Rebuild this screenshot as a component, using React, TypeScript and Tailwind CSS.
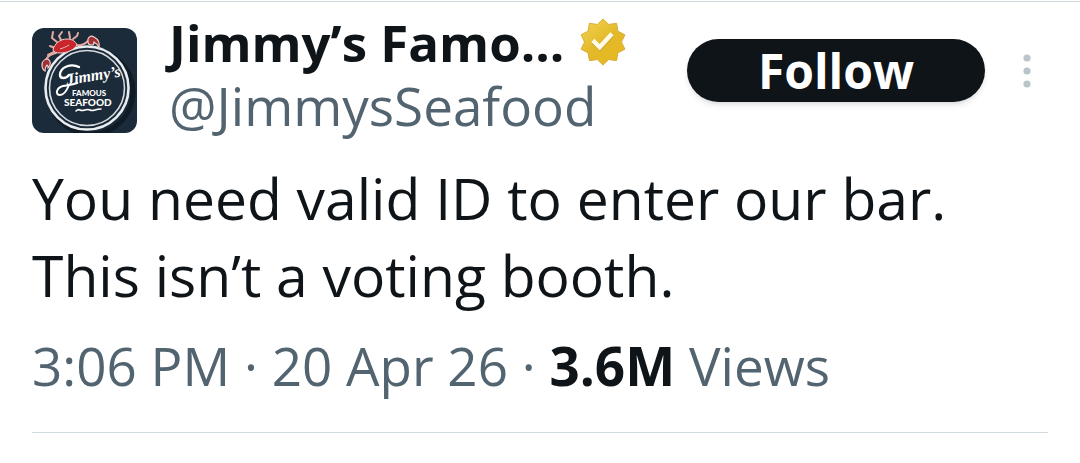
const BADGE_OUTLINE =
  'M13.324 3.848L11 1.6 8.676 3.848l-3.201-.453-.559 3.184L2.06 8.095 3.48 11l-1.42 2.904 2.856 1.516.559 3.184 3.201-.452L11 20.4l2.324-2.248 3.201.452.559-3.184 2.856-1.516L18.52 11l1.42-2.905-2.856-1.516-.559-3.184z';

const post = {
  name: 'Jimmy’s Famo...',
  handle: '@JimmysSeafood',
  lines: ['You need valid ID to enter our bar.', 'This isn’t a voting booth.'],
  time: '3:06 PM',
  date: '20 Apr 26',
  views: '3.6M',
};

function Avatar() {
  return (
    <svg
      viewBox="0 0 105 105"
      className="size-[105px] shrink-0 rounded-xl bg-[#1b2b3a]"
      role="img"
      aria-label="Jimmy's Famous Seafood"
    >
      {/* drop shadow behind the rings */}
      <circle cx="59" cy="64" r="42" fill="none" stroke="#101b26" strokeWidth="5" />
      <circle cx="55" cy="60" r="41.5" fill="#1b2b3a" stroke="#e9edf0" strokeWidth="2.6" />
      <circle cx="55" cy="60" r="37.5" fill="none" stroke="#d5dbdf" strokeWidth="1.6" />

      {/* crab */}
      <g fill="none" stroke="#e3a9a3" strokeWidth="2" strokeLinecap="round" strokeLinejoin="round">
        <path d="M25 14l-5-4 1-6M29 12l-2-4 3-4M38 10l-1-6M41 11l4-3 1-3" />
        <path d="M23 20l-5-2M22 24l-6 3M44 17c5 1 9-1 12-4M24 25c-6 1-9 4-11 8" />
      </g>
      <path
        d="M21 22c1-6 7-11 14-11 6 0 9 3 10 6-3 5-10 8-17 8-4 0-6-1-7-3z"
        fill="#c9252c"
        stroke="#f0cfcb"
        strokeWidth="1"
      />
      <path d="M28 21c3-1 6-2 9-4" fill="none" stroke="#f2b8b3" strokeWidth="1" />
      <path
        d="M56 14c-1-5 3-7 6-5 4 2 6 6 5 11-1-3-3-5-5-6 0 2-1 3-2 3-2 0-4-1-4-3z"
        fill="#9f3034"
        stroke="#f0cfcb"
        strokeWidth="1.2"
      />
      <path
        d="M16 31c-4 0-6 3-6 6 0 3 1 5 3 6 0-3 0-4 2-6 1 0 1 1 1 3 3-3 3-7 0-9z"
        fill="#9f3034"
        stroke="#f0cfcb"
        strokeWidth="1.2"
      />

      {/* flourishes of the script initial */}
      <path
        d="M47 39c-8-4-19 0-19 8 0 4 6 4 9 0"
        fill="none"
        stroke="#fff"
        strokeWidth="2.4"
        strokeLinecap="round"
      />
      <path
        d="M37 57c-2 5-5 10-9 10-5 0-4-7 3-9 4-1 9-1 14-3"
        fill="none"
        stroke="#fff"
        strokeWidth="2"
        strokeLinecap="round"
      />
      <g fill="#fff">
        <text
          x="35"
          y="57"
          fontSize="16"
          transform="rotate(-9 35 57)"
          className="font-['Liberation_Serif',serif] font-bold italic"
        >
          Jimmy’s
        </text>
        <text x="40" y="68" fontSize="8" className="font-['Lato',sans-serif] font-black">
          FAMOUS
        </text>
        <text x="32" y="78" fontSize="10" className="font-['Lato',sans-serif] font-black">
          SEAFOOD
        </text>
      </g>
      <path
        d="M44 83q2-2 4-1t5 0 5 0 5 0 6-1"
        fill="none"
        stroke="#fff"
        strokeWidth="1.6"
        strokeLinecap="round"
      />
    </svg>
  );
}

function GoldBadge() {
  return (
    <svg viewBox="0 0 22 22" className="size-[54px] shrink-0" role="img" aria-label="Verified">
      <defs>
        <linearGradient id="gold" x1="4" y1="2" x2="18" y2="20" gradientUnits="userSpaceOnUse">
          <stop offset="0" stopColor="#f2d24c" />
          <stop offset="0.5" stopColor="#e3b92b" />
          <stop offset="1" stopColor="#e5b91c" />
        </linearGradient>
      </defs>
      <path d={BADGE_OUTLINE} fill="url(#gold)" stroke="#d8ab38" strokeWidth="0.4" />
      <path
        d="M6.234 11.423l3.428 3.428 5.683-6.206-1.347-1.247-4.4 4.795-2.072-2.072z"
        fill="#c9961c"
      />
      <path
        d="M6.234 11.023l3.428 3.428 5.683-6.206-1.347-1.247-4.4 4.795-2.072-2.072z"
        fill="#fffbe8"
      />
    </svg>
  );
}

export default function App() {
  return (
    <main className="bg-white pt-px font-['Open_Sans',sans-serif] text-[#0f1419]">
      <article className="border-t border-[#cfd9de] px-8 pt-2">
        <header className="flex items-start">
          <div className="mt-[18px] flex shrink-0">
            <Avatar />
          </div>
          <div className="ml-8 min-w-0 flex-1 whitespace-nowrap leading-16">
            <div className="flex items-center gap-3">
              <h1 className="text-[51px] font-bold">{post.name}</h1>
              <GoldBadge />
            </div>
            <a href="#profile" className="block text-[53px] text-[#536471]">
              {post.handle}
            </a>
          </div>
          <div className="mt-[29px] flex shrink-0 items-center">
            <button
              type="button"
              className="h-[63px] w-[298px] rounded-full bg-[#0f1419] text-[48px] leading-[63px] font-bold text-white shadow-md"
            >
              Follow
            </button>
            <button type="button" aria-label="More" className="ml-5 flex w-[43px] justify-center">
              <svg viewBox="0 0 20 40" className="h-10 w-5" fill="#b9c5cb">
                <circle cx="10" cy="7" r="3.6" />
                <circle cx="10" cy="20" r="3.6" />
                <circle cx="10" cy="33" r="3.6" />
              </svg>
            </button>
          </div>
        </header>

        <div className="mt-[22px] text-[57px] leading-[77px]">
          {post.lines.map((line) => (
            <p key={line}>{line}</p>
          ))}
        </div>

        <p className="mt-5 border-b border-[#cfd9de] pb-[34px] text-[53px] leading-16 text-[#536471]">
          {post.time} · {post.date} · <strong className="font-bold text-[#0f1419]">{post.views}</strong> Views
        </p>
      </article>
    </main>
  );
}
